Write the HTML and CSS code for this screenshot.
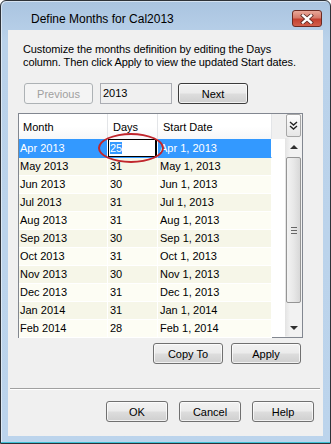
FILE: index.html
```html
<!DOCTYPE html>
<html lang="en">
<head>
    <meta charset="UTF-8">
    <meta name="viewport" content="width=device-width, initial-scale=1.0">
    <title>Define Months</title>
    <link rel="stylesheet" href="styles.css">
</head>
<body>

<div class="window">
    <div class="titlebar">
        <span class="title">Define Months for Cal2013</span>
        <div class="close-btn">
            <svg width="14" height="10" viewBox="0 0 14 10">
                <path d="M3 1.5 L11 8.5 M11 1.5 L3 8.5" stroke="#5a2a24" stroke-width="4" stroke-linecap="square"/>
                <path d="M3 1.5 L11 8.5 M11 1.5 L3 8.5" stroke="#ffffff" stroke-width="2.4" stroke-linecap="square"/>
            </svg>
        </div>
    </div>

    <div class="client">
        <p class="intro">Customize the months definition by editing the Days<br>column. Then click Apply to view the updated Start dates.</p>

        <!--navegar entre años-->
        <div class="nav-row">
            <button class="btn btn-prev" disabled>Previous</button>
            <div class="year-box">2013</div>
            <button class="btn btn-next">Next</button>
        </div>

        <div class="grid-box">
            <div class="grid-main">
                <table class="months">
                    <colgroup>
                        <col class="c-month">
                        <col class="c-days">
                        <col class="c-start">
                    </colgroup>
                    <thead>
                        <tr>
                            <th class="h-month">Month</th>
                            <th>Days</th>
                            <th>Start Date</th>
                        </tr>
                    </thead>
                    <tbody>
                        <tr class="selected">
                            <td>Apr 2013</td>
                            <td class="editing"><div class="cell-editor"><span class="sel-text">25</span></div></td>
                            <td>Apr 1, 2013</td>
                        </tr>
                        <tr><td>May 2013</td><td>31</td><td>May 1, 2013</td></tr>
                        <tr><td>Jun 2013</td><td>30</td><td>Jun 1, 2013</td></tr>
                        <tr><td>Jul 2013</td><td>31</td><td>Jul 1, 2013</td></tr>
                        <tr><td>Aug 2013</td><td>31</td><td>Aug 1, 2013</td></tr>
                        <tr><td>Sep 2013</td><td>30</td><td>Sep 1, 2013</td></tr>
                        <tr><td>Oct 2013</td><td>31</td><td>Oct 1, 2013</td></tr>
                        <tr><td>Nov 2013</td><td>30</td><td>Nov 1, 2013</td></tr>
                        <tr><td>Dec 2013</td><td>31</td><td>Dec 1, 2013</td></tr>
                        <tr><td>Jan 2014</td><td>31</td><td>Jan 1, 2014</td></tr>
                        <tr><td>Feb 2014</td><td>28</td><td>Feb 1, 2014</td></tr>
                    </tbody>
                </table>
            </div>

            <div class="grid-side">
                <div class="corner-btn">
                    <svg width="9" height="9" viewBox="0 0 9 9">
                        <path d="M1 1 L4.5 4 L8 1 M1 5 L4.5 8 L8 5" fill="none" stroke="#222" stroke-width="1.4"/>
                    </svg>
                </div>
                <div class="vscroll">
                    <div class="arrow"><span class="tri-up"></span></div>
                    <div class="thumb"><span class="grip"></span></div>
                    <div class="arrow arrow-down"><span class="tri-down"></span></div>
                </div>
            </div>

            <!--circulo rojo de anotacion-->
            <div class="ring"></div>
        </div>

        <div class="action-row">
            <button class="btn btn-wide">Copy To</button>
            <button class="btn btn-wide">Apply</button>
        </div>

        <div class="separator"></div>

        <div class="footer-row">
            <button class="btn btn-foot">OK</button>
            <button class="btn btn-foot">Cancel</button>
            <button class="btn btn-foot">Help</button>
        </div>
    </div>
</div>

</body>
</html>
```

FILE: styles.css
```css
body {
    margin: 0;
    background: #ffffff;
    font-family: "Liberation Sans", Arial, sans-serif;
    font-size: 11px;
    color: #000;
}

.window {
    width: 331px;
    height: 444px;
    box-sizing: border-box;
    border: 1px solid #2e3238;
    border-radius: 6px 6px 0 0;
    background: linear-gradient(#aac4e0, #bad2ea 40px, #bcd4ec);
    box-shadow: inset 0 -1px #3fc1d6, inset 1px 1px rgba(255,255,255,0.5);
    padding: 0 7px 7px 7px;
}

.titlebar {
    height: 29px;
    display: flex;
    align-items: flex-start;
    justify-content: space-between;
}

.title {
    font-size: 12px;
    padding: 11px 0 0 23px;
    color: #000;
}

.close-btn {
    width: 30px;
    height: 17px;
    box-sizing: border-box;
    margin: 9px 1px 0 0;
    border: 1px solid #6b2a22;
    border-radius: 3px;
    background: linear-gradient(#e9a899, #d67a6a 45%, #c4402f 55%, #d2604c);
    display: flex;
    align-items: center;
    justify-content: center;
}

.client {
    height: 406px;
    background: #f0f0f0;
    display: flex;
    flex-direction: column;
}

.intro {
    margin: 13px 0 0 15px;
    line-height: 13px;
    letter-spacing: -0.1px;
}

.nav-row {
    display: flex;
    margin: 14px 0 0 16px;
    height: 21px;
}

.btn {
    font-family: "Liberation Sans", Arial, sans-serif;
    font-size: 11px;
    color: #000;
    height: 21px;
    padding: 0;
    border: 1px solid #707070;
    border-radius: 3px;
    background: linear-gradient(#f2f2f2, #ebebeb 48%, #dddddd 52%, #cfcfcf);
    box-shadow: inset 0 0 0 1px rgba(255,255,255,0.7);
}

.btn-prev {
    width: 69px;
    color: #a0a0a0;
    border-color: #adb2b5;
    background: #f4f4f4;
    box-shadow: none;
}

.year-box {
    width: 72px;
    height: 21px;
    box-sizing: border-box;
    margin: 0 6px 0 7px;
    border: 1px solid #abadb3;
    background: #f0f0f0;
    padding: 3px 0 0 2px;
}

.btn-next {
    width: 70px;
    border-color: #3c3c3c;
}

/* tabla de meses */
.grid-box {
    position: relative;
    margin: 9px 0 0 10px;
    width: 285px;
    height: 225px;
    box-sizing: border-box;
    border: 1px solid #828790;
    background: #fff;
    display: flex;
}

.grid-main {
    width: 266px;
    background: linear-gradient(#f0f0f0 25px, #ffffff 25px);
}

.months {
    width: 253px;
    table-layout: fixed;
    border-collapse: separate;
    border-spacing: 0;
}

.c-month { width: 89px; }
.c-days { width: 50px; }
.c-start { width: 114px; }

.months th {
    height: 25px;
    padding: 0 0 0 5px;
    box-sizing: border-box;
    text-align: left;
    font-weight: normal;
    background: linear-gradient(#ffffff, #ffffff 50%, #f6f7f8);
    border-right: 1px solid #e3e5e8;
}

.months th.h-month {
    padding-left: 4px;
}

.months td {
    line-height: 17px;
    padding: 0 0 0 2px;
    border-right: 1px solid #fff;
    border-bottom: 1px solid #fff;
    white-space: nowrap;
    overflow: hidden;
    background: #fdfdf4;
}

.months td:first-child {
    padding-left: 1px;
}

.months tbody tr:nth-child(even) td {
    background: #f6f6e8;
}

.months tr.selected td {
    background: #3399ff;
    color: #fff;
    border-bottom-color: #3399ff;
}

.months td.editing {
    padding: 0;
}

.cell-editor {
    height: 16px;
    line-height: 16px;
    border: 1px solid #000;
    border-right-width: 2px;
    background: #fff;
    padding-left: 1px;
}

.sel-text {
    background: #3399ff;
    color: #fff;
}

.grid-side {
    width: 17px;
    background: #f0f0f0;
}

.corner-btn {
    width: 15px;
    height: 23px;
    box-sizing: border-box;
    margin: 0 0 1px 1px;
    border: 1px solid #a7a7a7;
    border-radius: 2px;
    background: linear-gradient(#fdfdfd, #e6e6e6);
    display: flex;
    align-items: center;
    justify-content: center;
}

.vscroll {
    height: 198px;
    display: flex;
    flex-direction: column;
    background: linear-gradient(90deg, #e3e3e3, #f2f2f2 30%, #f2f2f2);
}

.arrow {
    height: 17px;
    display: flex;
    align-items: center;
    justify-content: center;
}

.arrow-down {
    margin-top: auto;
}

.tri-up {
    border-left: 4px solid transparent;
    border-right: 4px solid transparent;
    border-bottom: 4px solid #303030;
}

.tri-down {
    border-left: 4px solid transparent;
    border-right: 4px solid transparent;
    border-top: 4px solid #303030;
}

.thumb {
    height: 146px;
    margin: 2px 1px 0 1px;
    box-sizing: border-box;
    border: 1px solid #959595;
    border-radius: 2px;
    background: linear-gradient(90deg, #f3f3f3, #e8e8e8 50%, #d8d8d8);
    display: flex;
    align-items: center;
    justify-content: center;
}

.grip {
    width: 6px;
    height: 5px;
    border-top: 1px solid #666;
    border-bottom: 1px solid #666;
    background: linear-gradient(transparent 2px, #666 2px, #666 3px, transparent 3px);
}

.ring {
    position: absolute;
    left: 79px;
    top: 19px;
    width: 66px;
    height: 30px;
    box-sizing: border-box;
    border: 2px solid #c0262c;
    border-radius: 50%;
}

.action-row {
    display: flex;
    justify-content: flex-end;
    gap: 8px;
    margin: 5px 22px 0 0;
}

.btn-wide {
    width: 70px;
}

.separator {
    margin: 24px 3px 0 2px;
    border-top: 1px solid #a0a0a0;
    border-bottom: 1px solid #fff;
}

.footer-row {
    display: flex;
    justify-content: flex-end;
    gap: 11px;
    margin: 11px 9px 0 0;
}

.btn-foot {
    width: 62px;
}
```
